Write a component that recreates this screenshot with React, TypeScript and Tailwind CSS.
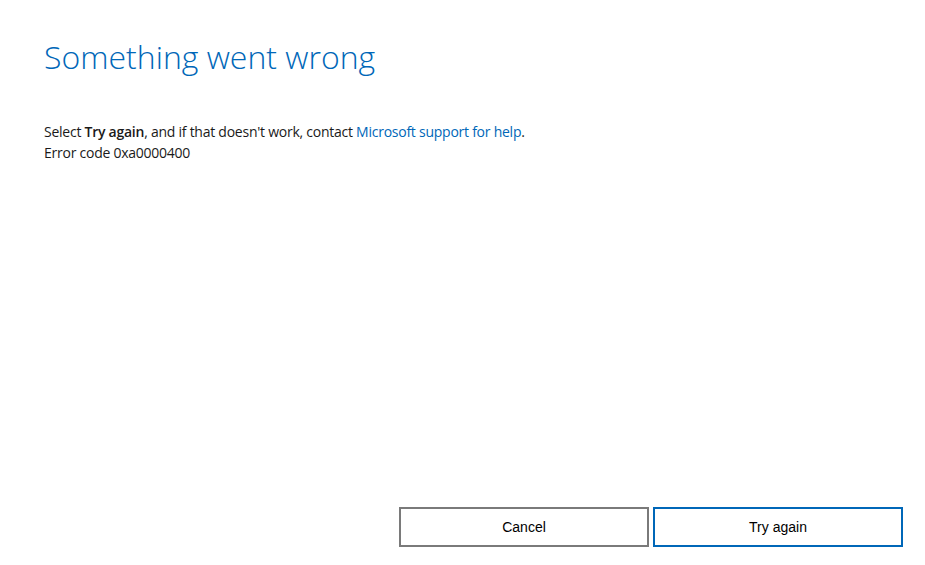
import React from 'react';

export default function App() {
  return (
    <div className="flex h-screen w-full flex-col bg-white">
      <div className="flex-1 px-[44px] pt-[37px]">
        <h1 className="font-['Open_Sans',sans-serif] text-[32px] font-light leading-[40px] text-[#0067b8]">
          Something went wrong
        </h1>
        <div className="mt-[44px] font-['Open_Sans',sans-serif] text-[14px] leading-[21px] tracking-[-0.25px] text-[#1a1a1a]">
          <p>
            Select <span className="font-semibold">Try again</span>, and if that doesn't work, contact{' '}
            <a href="#" className="text-[#0067b8]">Microsoft support for help</a>.
          </p>
          <p>Error code 0xa0000400</p>
        </div>
      </div>

      <div className="flex justify-end gap-[4px] pb-[18px] pr-[22px]">
        <button className="h-[40px] w-[250px] border-2 border-[#7a7a7a] bg-white font-['Liberation_Sans',sans-serif] text-[14px] text-black">
          Cancel
        </button>
        <button className="h-[40px] w-[250px] border-2 border-[#0067b8] bg-white font-['Liberation_Sans',sans-serif] text-[14px] text-black">
          Try again
        </button>
      </div>
    </div>
  );
}
